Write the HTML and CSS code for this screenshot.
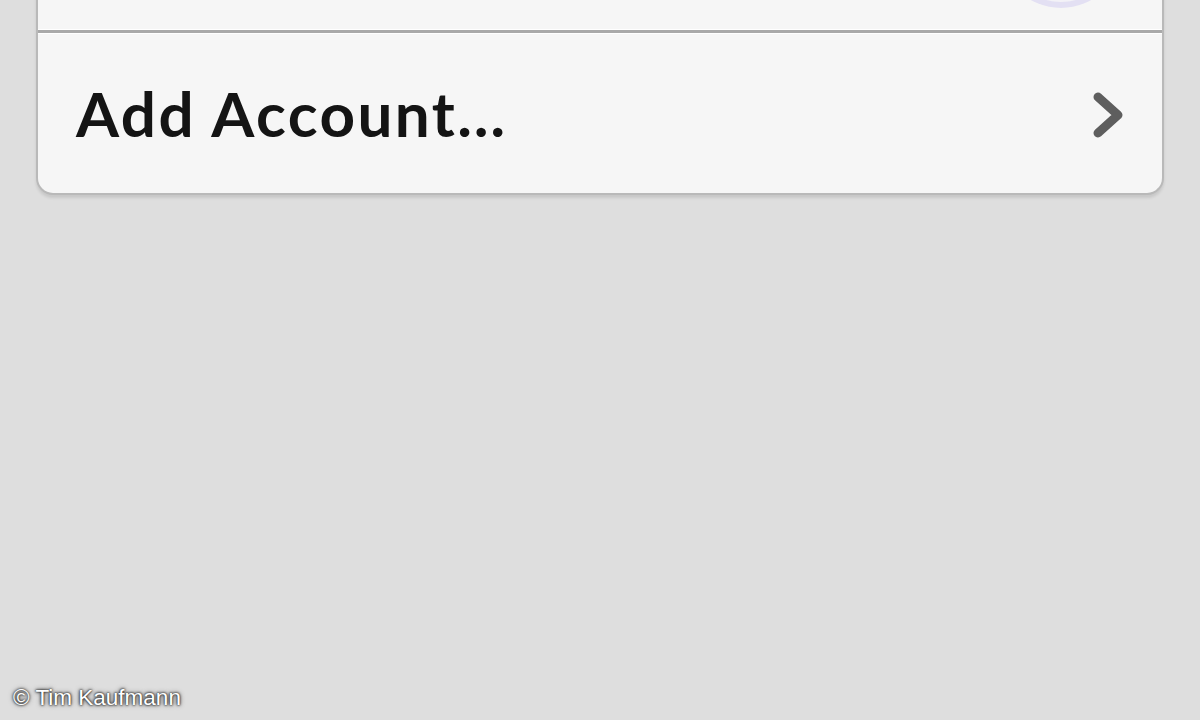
FILE: index.html
```html
<!DOCTYPE html>
<html lang="en">
<head>
<meta charset="utf-8">
<title>Accounts</title>
<link rel="stylesheet" href="styles.css">
</head>
<body>
<main class="screen">
  <section class="card">
    <div class="row row-top">
      <span class="row-label">Account</span>
      <span class="avatar"></span>
    </div>
    <div class="row row-add">
      <span class="row-label">Add Account…</span>
      <svg class="chevron" width="34" height="48" viewBox="0 0 34 48" aria-hidden="true">
        <path d="M7 6 L27 24 L7 42" fill="none" stroke="#5e5e5e" stroke-width="9" stroke-linecap="round" stroke-linejoin="round"/>
      </svg>
    </div>
  </section>
  <p class="credit">© Tim Kaufmann</p>
</main>
</body>
</html>
```

FILE: styles.css
```css
html, body {
  margin: 0;
  padding: 0;
  height: 100%;
  overflow: hidden;
}

body {
  background: #dedede;
  font-family: "Lato", "Liberation Sans", sans-serif;
}

.screen {
  height: 720px;
  display: flex;
  flex-direction: column;
  justify-content: space-between;
}

.card {
  margin: -130px 36px 0 36px;
  background: #f6f6f6;
  border: 2px solid #b9b9b9;
  border-top: none;
  border-radius: 0 0 17px 17px;
  box-shadow: 0 3px 3px rgba(0, 0, 0, 0.10);
  overflow: hidden;
}

.row {
  display: flex;
  align-items: center;
  justify-content: space-between;
  padding: 0 38px 0 38px;
}

.row-top {
  height: 160px;
  border-bottom: 3px solid #a9a9a9;
  box-shadow: inset 0 -1px 0 #fff;
  position: relative;
}

.row-top .row-label {
  visibility: hidden;
}

.avatar {
  position: absolute;
  right: 40px;
  bottom: 22px;
  width: 110px;
  height: 110px;
  border-radius: 50%;
  border: 6px solid rgba(175, 165, 230, 0.22);
  background: rgba(235, 232, 250, 0.3);
}

.row-add {
  height: 159px;
  border-top: 1px solid #ffffff;
}

.row-label {
  font-size: 62px;
  font-weight: 700;
  color: #141414;
  letter-spacing: 2.4px;
  margin-top: -2px;
}

.chevron {
  display: block;
  margin-right: -1px;
  margin-top: 2px;
}

.credit {
  margin: 0 0 10px 13px;
  font-family: "Liberation Sans", Arial, sans-serif;
  font-size: 22.5px;
  line-height: 24px;
  color: #ffffff;
  letter-spacing: 0;
  text-shadow: 0 0 2px #222, 0 0 3px #333, 0 0 5px #555;
}
```
